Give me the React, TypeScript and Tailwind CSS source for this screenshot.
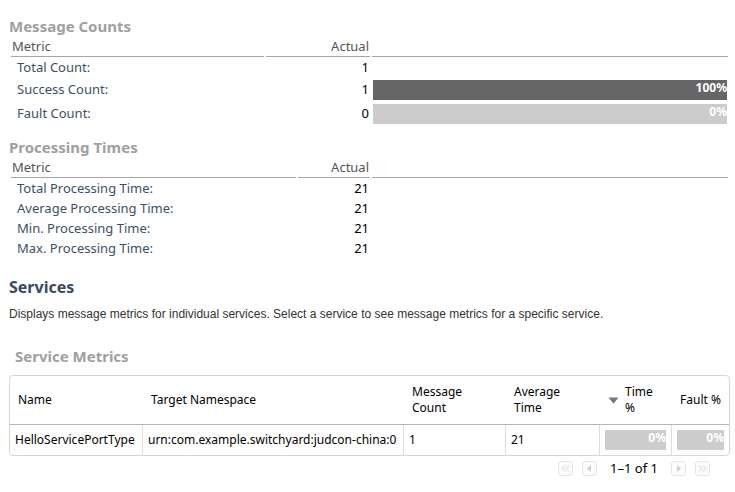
import type { ReactNode } from "react";

type MetricRow = { label: string; value: number; percent?: number };

const counts: MetricRow[] = [
  { label: "Total Count:", value: 1 },
  { label: "Success Count:", value: 1, percent: 100 },
  { label: "Fault Count:", value: 0, percent: 0 },
];

const times: MetricRow[] = [
  { label: "Total Processing Time:", value: 21 },
  { label: "Average Processing Time:", value: 21 },
  { label: "Min. Processing Time:", value: 21 },
  { label: "Max. Processing Time:", value: 21 },
];

function PercentBar({ percent }: { percent: number }) {
  return (
    <div className="relative h-5 bg-[#cccccc] text-right text-[12px] font-bold leading-4 text-white">
      <div className="absolute inset-y-0 left-0 bg-[#666666]" style={{ width: `${percent}%` }} />
      <span className="relative">{percent}%</span>
    </div>
  );
}

function MetricTable({
  title,
  rows,
  labelCol,
  valueCol,
}: {
  title: string;
  rows: MetricRow[];
  labelCol: string;
  valueCol: string;
}) {
  return (
    <section>
      <h3 className="text-[15px] font-bold leading-5 text-[#a0a0a0]">{title}</h3>
      <table className="w-full table-fixed border-separate border-spacing-x-[2px] border-spacing-y-0" aria-label={title}>
        <colgroup>
          <col className={labelCol} />
          <col className={valueCol} />
          <col />
        </colgroup>
        <thead>
          <tr className="h-[21px] leading-5 text-[#555555]">
            <th className="border-b border-[#a5a5b0] px-px text-left font-normal">Metric</th>
            <th className="border-b border-[#a5a5b0] px-px text-right font-normal">Actual</th>
            <td className="border-b border-[#a5a5b0]" />
          </tr>
        </thead>
        <tbody>
          {rows.map((row) => (
            <tr key={row.label} className={row.percent === undefined ? "h-5" : "h-6"}>
              <th className="pl-1.5 text-left font-normal text-[#3d4f66]">{row.label}</th>
              <td className="pr-px text-right">{row.value}</td>
              <td className="px-px pt-0.5">{row.percent !== undefined && <PercentBar percent={row.percent} />}</td>
            </tr>
          ))}
        </tbody>
      </table>
    </section>
  );
}

function PagerButton({ label, children }: { label: string; children: ReactNode }) {
  return (
    <button
      type="button"
      disabled
      aria-label={label}
      className="flex size-[15px] items-center justify-center rounded-[3px] border border-[#e6e6e6] bg-[#fcfcfc] text-[#cfcfcf]"
    >
      <svg viewBox="0 0 13 13" className="size-[13px] shrink-0" fill="none" stroke="currentColor">
        {children}
      </svg>
    </button>
  );
}

const headCell = "border-b border-[#b5b5b5] pl-2 pr-1 text-left font-normal";
const bodyCell = "border-r border-[#dddddd] px-[5px] overflow-hidden whitespace-nowrap";

export default function App() {
  return (
    <main className="bg-white pb-4 pl-[9px] pr-[5px] pt-4 font-['Noto_Sans',sans-serif] text-[13px] leading-4 text-black">
      <MetricTable title="Message Counts" rows={counts} labelCol="w-[253px]" valueCol="w-[104px]" />
      <div className="h-3" />
      <MetricTable title="Processing Times" rows={times} labelCol="w-[285px]" valueCol="w-[72px]" />

      <section className="pt-[17px]">
        <h2 className="text-[16px] font-bold leading-6 text-[#3b4a60]">Services</h2>
        <p className="pt-[5px] font-['Liberation_Sans',Arial,sans-serif] text-[12px] leading-5 text-[#333333]">
          Displays message metrics for individual services. Select a service to see message metrics for a specific
          service.
        </p>
        <h3 className="pb-[9px] pl-1.5 pt-[22px] text-[15px] font-bold leading-5 text-[#a0a0a0]">Service Metrics</h3>
        <div className="overflow-hidden rounded border border-[#d6d6d6]">
          <table className="w-full table-fixed border-separate border-spacing-0 text-[12px] leading-4" aria-label="Service Metrics">
            <colgroup>
              <col className="w-[133px]" />
              <col />
              <col className="w-[102px]" />
              <col className="w-[94px]" />
              <col className="w-[72px]" />
              <col className="w-[57px]" />
            </colgroup>
            <thead>
              <tr className="h-[49px]">
                <th className={headCell}>Name</th>
                <th className={headCell}>Target Namespace</th>
                <th className={headCell}>
                  Message
                  <br />
                  Count
                </th>
                <th className={headCell}>
                  Average
                  <br />
                  Time
                </th>
                <th className={headCell} aria-sort="descending">
                  <span className="flex items-center gap-1.5">
                    <svg viewBox="0 0 11 7" className="h-[7px] w-[11px]" fill="#6f7889">
                      <path d="M0.5 0.5h10L5.5 6.8z" />
                    </svg>
                    <span>
                      Time
                      <br />%
                    </span>
                  </span>
                </th>
                <th className="whitespace-nowrap border-b border-[#b5b5b5] pl-2 text-left font-normal">Fault %</th>
              </tr>
            </thead>
            <tbody>
              <tr className="h-[30px]">
                <td className={bodyCell}>HelloServicePortType</td>
                <td className={bodyCell}>
                  <div className="-mr-[5px] overflow-hidden">urn:com.example.switchyard:judcon-china:0</div>
                </td>
                <td className={bodyCell}>1</td>
                <td className={bodyCell}>21</td>
                <td className={bodyCell}>
                  <PercentBar percent={0} />
                </td>
                <td className="px-[5px]">
                  <PercentBar percent={0} />
                </td>
              </tr>
            </tbody>
          </table>
        </div>
        <nav aria-label="Service pages" className="flex items-center justify-end gap-[9px] pr-5 pt-1">
          <PagerButton label="First page">
            <path d="M6 3.5L3 6.5L6 9.5M10 3.5L7 6.5L10 9.5" />
          </PagerButton>
          <PagerButton label="Previous page">
            <path d="M8 3L4 6.5L8 10z" fill="currentColor" stroke="none" />
          </PagerButton>
          <span className="px-1">1–1 of 1</span>
          <PagerButton label="Next page">
            <path d="M5 3L9 6.5L5 10z" fill="currentColor" stroke="none" />
          </PagerButton>
          <PagerButton label="Last page">
            <path d="M3 3.5L6 6.5L3 9.5M7 3.5L10 6.5L7 9.5" />
          </PagerButton>
        </nav>
      </section>
    </main>
  );
}
